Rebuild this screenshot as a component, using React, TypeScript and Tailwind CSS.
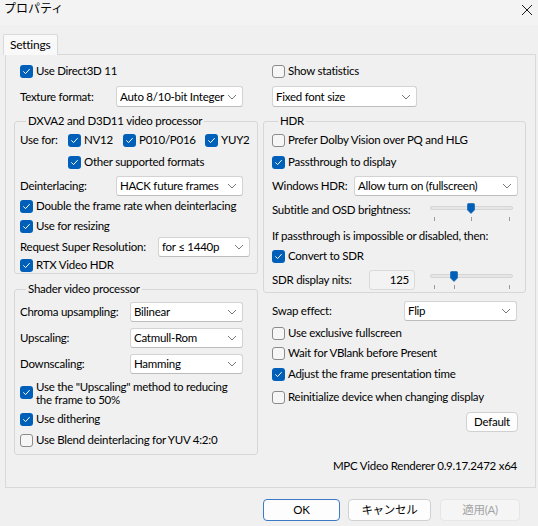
import React from "react";

const FONT = "font-['Segoe_UI','Lato','Noto_Sans_CJK_JP',sans-serif]";

function Check({ checked }: { checked?: boolean }) {
  if (checked) {
    return (
      <span className="flex h-[13px] w-[13px] shrink-0 items-center justify-center rounded-[3px] bg-[#005fb8]">
        <svg width="9" height="9" viewBox="0 0 9 9" fill="none">
          <path d="M1.6 4.7 L3.6 6.6 L7.4 2.4" stroke="#ffffff" strokeWidth="1" strokeLinecap="round" strokeLinejoin="round" />
        </svg>
      </span>
    );
  }
  return <span className="h-[13px] w-[13px] shrink-0 rounded-[3px] border border-[#8b8b8b] bg-[#f6f6f6]" />;
}

function CheckRow({
  label,
  checked,
  className = "h-[20px]",
}: {
  label: string;
  checked?: boolean;
  className?: string;
}) {
  return (
    <div className={`flex items-center gap-[3px] whitespace-nowrap ${className}`}>
      <Check checked={checked} />
      <span>{label}</span>
    </div>
  );
}

function Select({ value, className }: { value: string; className: string }) {
  return (
    <div
      className={`flex shrink-0 items-center justify-between rounded-[3px] border border-[#d3d3d3] border-b-[#bcbcbc] bg-white pl-[3px] pr-[5px] whitespace-nowrap ${className}`}
    >
      <span>{value}</span>
      <svg width="10" height="6" viewBox="0 0 10 6" fill="none">
        <path d="M1 1 L5 5 L9 1" stroke="#7a7a7a" strokeWidth="1" />
      </svg>
    </div>
  );
}

function Group({
  title,
  className,
  children,
}: {
  title: string;
  className: string;
  children: React.ReactNode;
}) {
  return (
    <fieldset className={`min-w-0 rounded-[3px] border border-[#d7d7d7] ${className}`}>
      <legend className="ml-[6px] px-[2px] leading-[16px] whitespace-nowrap">{title}</legend>
      {children}
    </fieldset>
  );
}

function Thumb() {
  return (
    <svg width="8" height="11" viewBox="0 0 8 11">
      <path d="M0.5 1.5 Q0.5 0.5 1.5 0.5 H6.5 Q7.5 0.5 7.5 1.5 V7 L4 10.5 L0.5 7 Z" fill="#005fb8" stroke="#0a5aa6" strokeWidth="0.6" />
    </svg>
  );
}

function Track() {
  return <div className="absolute top-[8px] left-0 h-[4px] w-[83px] rounded-[2px] border border-[#d5d5d5] bg-[#e6e6e6]" />;
}

function Tick({ className }: { className: string }) {
  return <div className={`absolute top-[19px] h-[4px] w-px bg-[#9a9a9a] ${className}`} />;
}

function BrightnessSlider() {
  return (
    <div className="relative h-[24px] w-[83px] shrink-0">
      <Track />
      <Tick className="left-[4px]" />
      <Tick className="left-[41px]" />
      <Tick className="left-[79px]" />
      <div className="absolute top-[5px] left-[37px]">
        <Thumb />
      </div>
    </div>
  );
}

function NitsSlider() {
  return (
    <div className="relative -mt-[4px] h-[24px] w-[83px] shrink-0 self-start">
      <Track />
      <Tick className="left-[4px]" />
      <Tick className="left-[24px]" />
      <Tick className="left-[79px]" />
      <div className="absolute top-[5px] left-[20px]">
        <Thumb />
      </div>
    </div>
  );
}

function Button({ label, className }: { label: string; className: string }) {
  return (
    <div className={`flex h-[22px] shrink-0 items-center justify-center rounded-[4px] border ${className}`}>
      {label}
    </div>
  );
}

function Label({ text, className }: { text: string; className: string }) {
  return <span className={`shrink-0 whitespace-nowrap ${className}`}>{text}</span>;
}

export default function App() {
  return (
    <div
      className={`flex h-[526px] w-[538px] flex-col bg-[#f0f0f0] text-[11.5px] leading-[16px] tracking-[-0.25px] text-black ${FONT}`}
    >
      {/* title bar */}
      <div className="flex h-[25px] items-start justify-between bg-[#f3f3f3] pt-px pl-[4px] pr-[4px]">
        <span className="text-[12px] tracking-normal">プロパティ</span>
        <svg width="12" height="12" viewBox="0 0 12 12" className="mt-[3px] mr-[1px]">
          <path d="M1 1 L11 11 M11 1 L1 11" stroke="#1a1a1a" strokeWidth="1" />
        </svg>
      </div>

      {/* tab */}
      <div className="mt-[9px] ml-[3px] flex">
        <div className="relative z-10 -mb-px flex h-[21px] w-[55px] items-center rounded-t-[2px] border border-b-0 border-[#d9d9d9] bg-[#f9f9f9] pl-[6px] text-[12px]">
          Settings
        </div>
      </div>

      {/* panel */}
      <div className="ml-[5px] flex h-[434px] w-[531px] flex-col border border-[#d9d9d9] bg-[#f0f0f0]">
        <div className="flex gap-[5px] pt-[6px] pl-[8px]">
          {/* left column */}
          <div className="flex w-[244px] flex-col">
            <div className="pl-[6px]">
              <CheckRow label="Use Direct3D 11" checked />
            </div>
            <div className="mt-[5px] flex h-[21px] items-center pl-[6px]">
              <Label text="Texture format:" className="w-[96px]" />
              <Select value="Auto 8/10-bit Integer" className="h-[21px] w-[127px]" />
            </div>

            <Group title="DXVA2 and D3D11 video processor" className="mt-[6px] pl-[5px]">
              <div className="flex h-[22px] items-center whitespace-nowrap">
                <Label text="Use for:" className="w-[48px]" />
                <div className="w-[55px] shrink-0">
                  <CheckRow label="NV12" checked />
                </div>
                <div className="w-[82px] shrink-0">
                  <CheckRow label="P010/P016" checked />
                </div>
                <CheckRow label="YUY2" checked />
              </div>
              <div className="pl-[48px]">
                <CheckRow label="Other supported formats" checked className="h-[22px]" />
              </div>
              <div className="mt-[3px] flex h-[20px] items-center">
                <Label text="Deinterlacing:" className="w-[96px]" />
                <Select value="HACK future frames" className="h-[20px] w-[127px]" />
              </div>
              <CheckRow label="Double the frame rate when deinterlacing" checked />
              <CheckRow label="Use for resizing" checked />
              <div className="mt-px flex h-[20px] items-center">
                <Label text="Request Super Resolution:" className="w-[138px]" />
                <Select value="for ≤ 1440p" className="h-[20px] w-[92px]" />
              </div>
              <CheckRow label="RTX Video HDR" checked className="h-[16px]" />
            </Group>

            <Group title="Shader video processor" className="mt-[7px] pb-[4px] pl-[5px]">
              <div className="mt-[5px] flex h-[20px] items-center">
                <Label text="Chroma upsampling:" className="w-[110px]" />
                <Select value="Bilinear" className="h-[20px] w-[113px]" />
              </div>
              <div className="mt-[6px] flex h-[20px] items-center">
                <Label text="Upscaling:" className="w-[110px]" />
                <Select value="Catmull-Rom" className="h-[20px] w-[113px]" />
              </div>
              <div className="mt-[6px] flex h-[20px] items-center">
                <Label text="Downscaling:" className="w-[110px]" />
                <Select value="Hamming" className="h-[20px] w-[113px]" />
              </div>
              <div className="mt-[5px] flex h-[27px] items-center gap-[3px] whitespace-nowrap">
                <Check checked />
                <div className="flex flex-col">
                  <span className="block h-[13px] leading-[13px]">Use the "Upscaling" method to reducing</span>
                  <span className="block h-[13px] leading-[13px]">the frame to 50%</span>
                </div>
              </div>
              <CheckRow label="Use dithering" checked className="mt-[3px] h-[20px]" />
              <CheckRow label="Use Blend deinterlacing for YUV 4:2:0" className="mt-px h-[20px]" />
            </Group>
          </div>

          {/* right column */}
          <div className="flex w-[263px] flex-col">
            <div className="pl-[9px]">
              <CheckRow label="Show statistics" />
            </div>
            <div className="mt-[5px] pl-[9px]">
              <Select value="Fixed font size" className="h-[21px] w-[145px]" />
            </div>

            <Group title="HDR" className="mt-[6px] pr-[7px] pb-[2px] pl-[8px]">
              <CheckRow label="Prefer Dolby Vision over PQ and HLG" className="h-[22px]" />
              <CheckRow label="Passthrough to display" checked className="h-[22px]" />
              <div className="mt-[3px] flex h-[20px] items-center">
                <Label text="Windows HDR:" className="w-[82px]" />
                <Select value="Allow turn on (fullscreen)" className="h-[20px] flex-1" />
              </div>
              <div className="mt-[2px] flex h-[24px] items-center">
                <Label text="Subtitle and OSD brightness:" className="w-[158px]" />
                <BrightnessSlider />
              </div>
              <div className="mt-[4px] flex h-[20px] items-center whitespace-nowrap">
                If passthrough is impossible or disabled, then:
              </div>
              <CheckRow label="Convert to SDR" checked />
              <div className="mt-[4px] flex h-[20px] items-center">
                <Label text="SDR display nits:" className="w-[97px]" />
                <div className="flex h-[20px] w-[46px] shrink-0 items-center justify-end rounded-[3px] border border-[#dadada] bg-[#f3f3f3] pr-[5px]">
                  125
                </div>
                <div className="w-[15px] shrink-0" />
                <NitsSlider />
              </div>
            </Group>

            <div className="mt-[8px] flex h-[20px] items-center pr-[8px] pl-[9px]">
              <Label text="Swap effect:" className="w-[132px]" />
              <Select value="Flip" className="h-[20px] w-[113px]" />
            </div>
            <div className="flex flex-col pl-[9px]">
              <CheckRow label="Use exclusive fullscreen" className="mt-[2px] h-[20px]" />
              <CheckRow label="Wait for VBlank before Present" />
              <CheckRow label="Adjust the frame presentation time" checked className="mt-px h-[20px]" />
              <CheckRow label="Reinitialize device when changing display" className="mt-[3px] h-[20px]" />
            </div>
            <div className="mt-[5px] flex justify-end pr-[8px]">
              <div className="flex h-[20px] w-[52px] items-center justify-center rounded-[4px] border border-[#d0d0d0] bg-[#fdfdfd]">
                Default
              </div>
            </div>
            <div className="mt-[26px] flex justify-end pr-[9px] whitespace-nowrap">
              MPC Video Renderer 0.9.17.2472 x64
            </div>
          </div>
        </div>
      </div>

      {/* dialog buttons */}
      <div className="mt-[11px] flex justify-end gap-[8px] pr-[18px]">
        <Button label="OK" className="w-[77px] border-[#3d7ac4] bg-[#fdfdfd]" />
        <Button label="キャンセル" className="w-[83px] border-[#d0d0d0] bg-[#fdfdfd]" />
        <Button label="適用(A)" className="ml-px w-[80px] border-[#e6e6e6] bg-[#f5f5f5] text-[#a3a3a3]" />
      </div>
    </div>
  );
}
